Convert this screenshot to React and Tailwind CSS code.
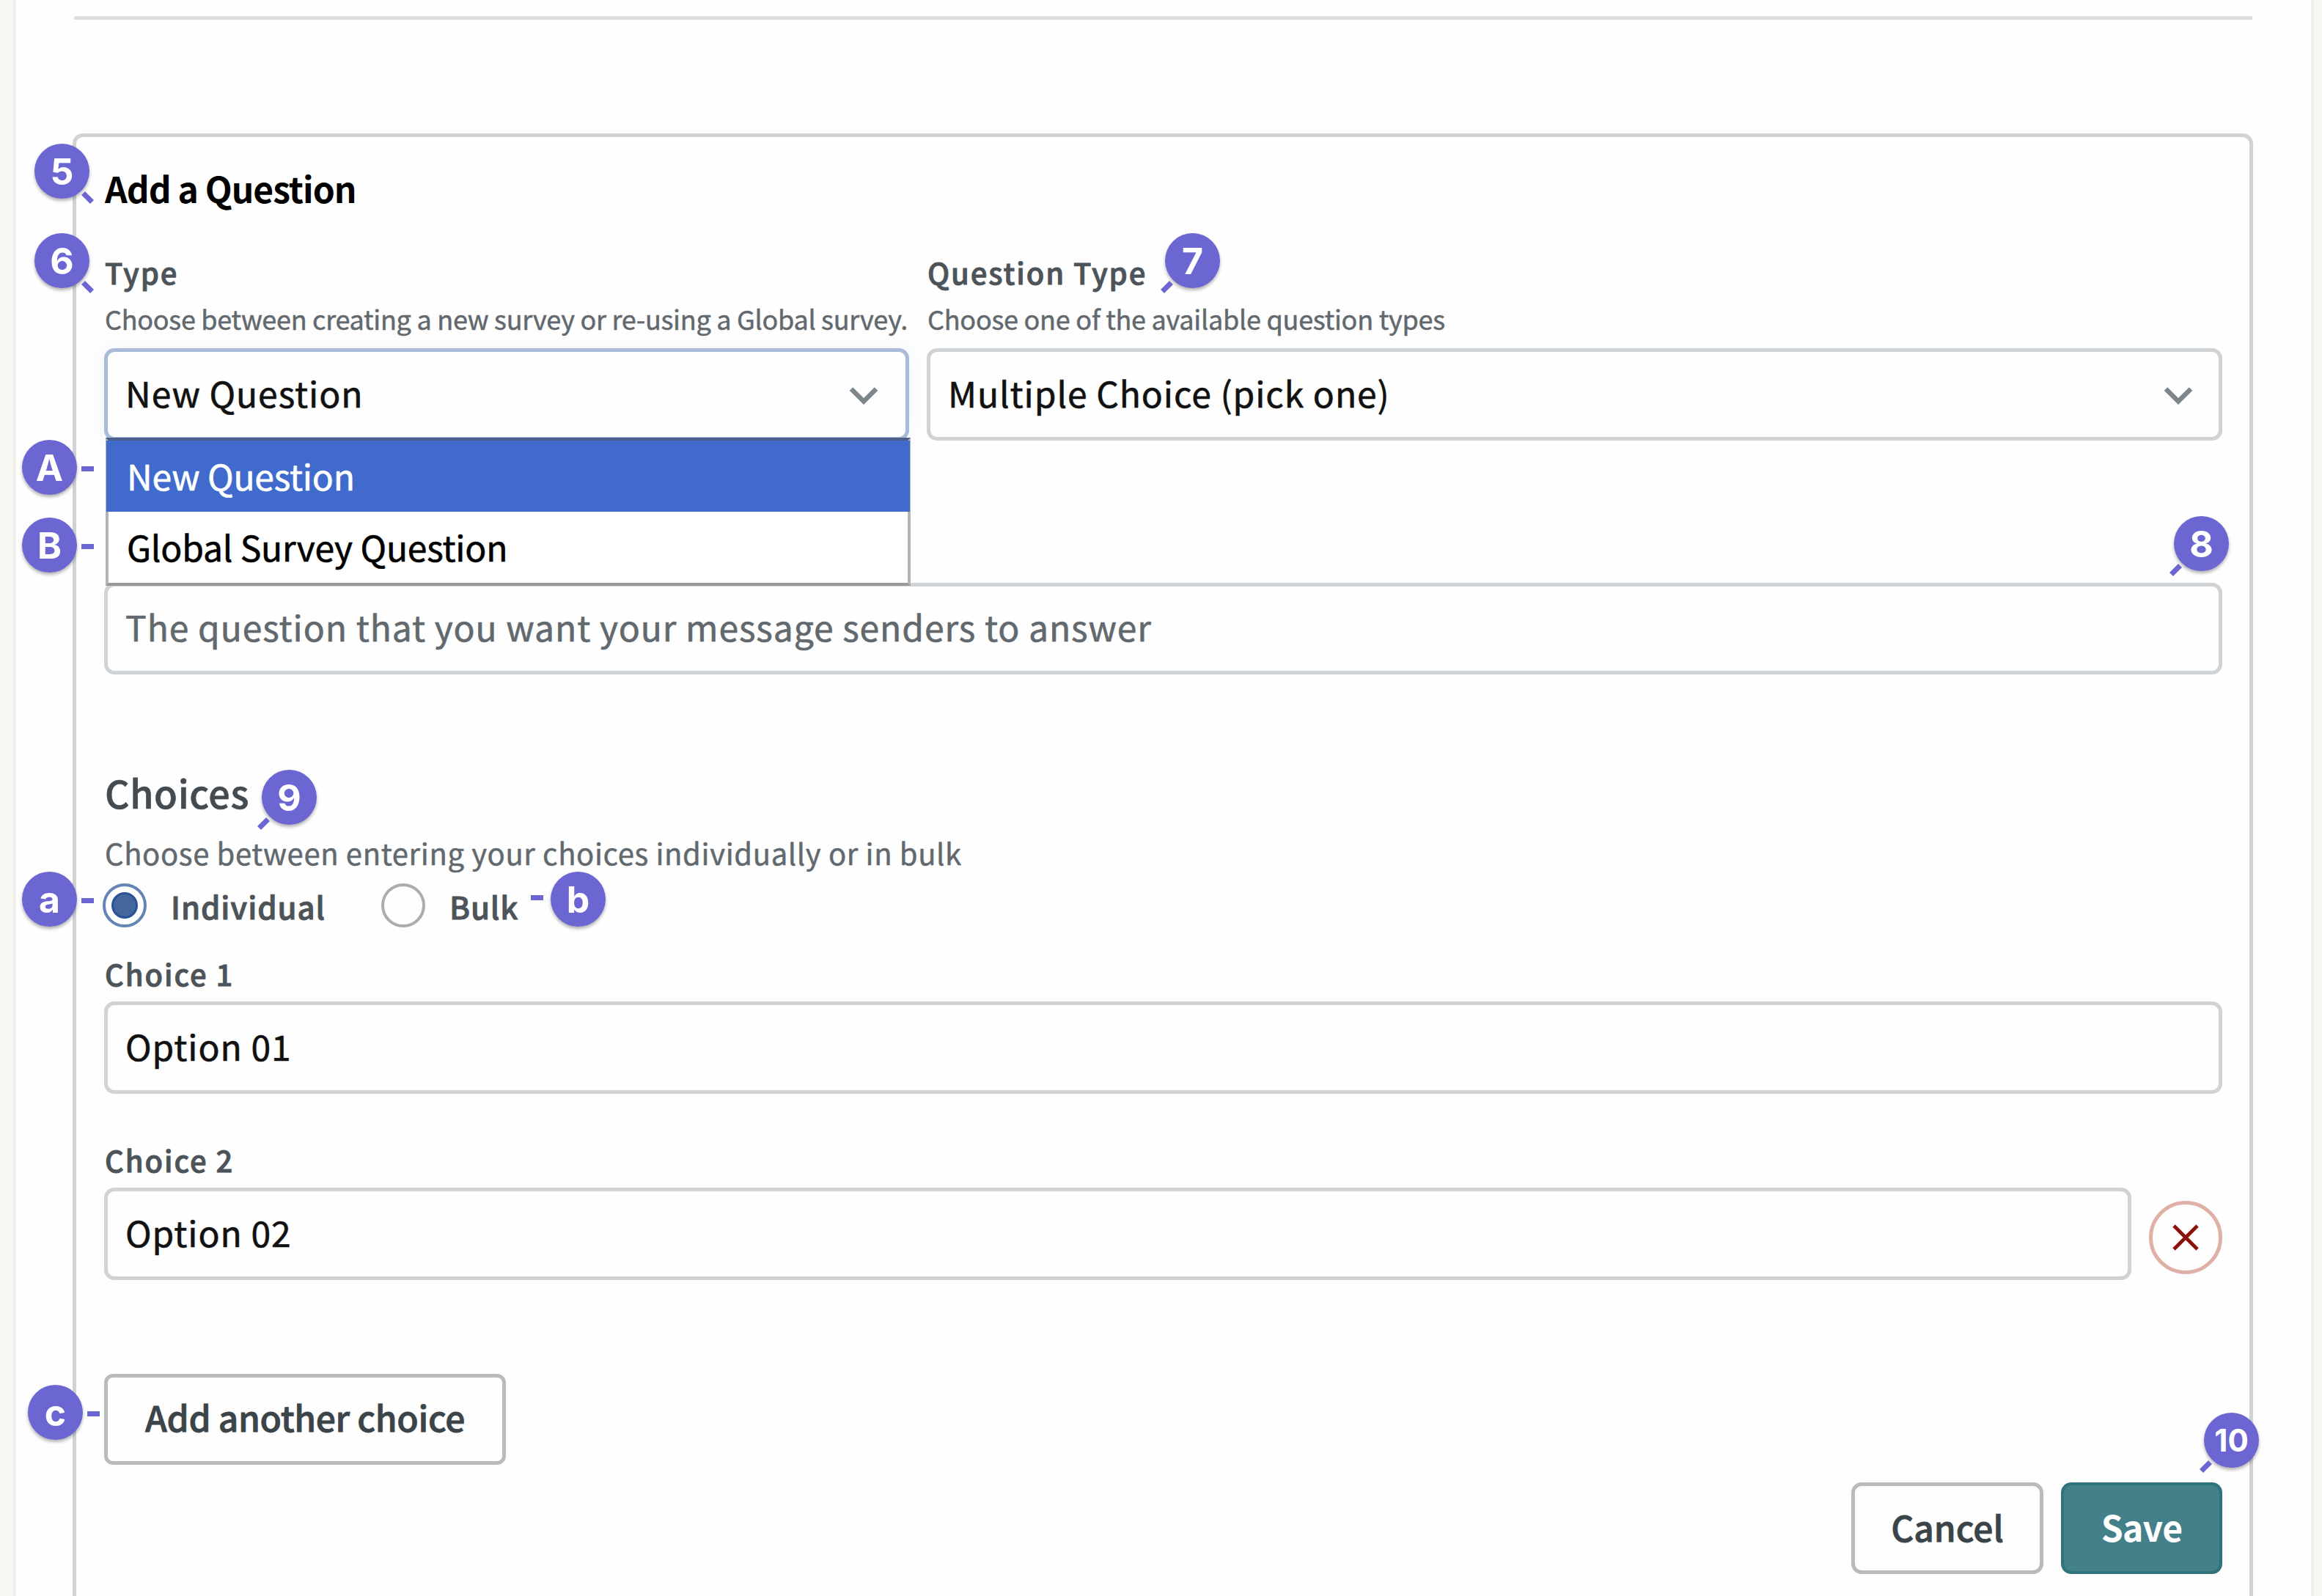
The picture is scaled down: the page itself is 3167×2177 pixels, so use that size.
const FONT = "font-['Noto_Sans_CJK_SC','Noto_Sans',sans-serif]";

const badges = [
  { label: '5', pos: 'left-[47px] top-[196px]', tail: 'br' },
  { label: '6', pos: 'left-[47px] top-[318px]', tail: 'br' },
  { label: '7', pos: 'left-[1589px] top-[318px]', tail: 'bl' },
  { label: '8', pos: 'left-[2965px] top-[704px]', tail: 'bl' },
  { label: '9', pos: 'left-[357px] top-[1050px]', tail: 'bl' },
  { label: '10', pos: 'left-[3006px] top-[1927px]', tail: 'bl' },
  { label: 'A', pos: 'left-[30px] top-[600px]', tail: 'r' },
  { label: 'B', pos: 'left-[30px] top-[706px]', tail: 'r' },
  { label: 'a', pos: 'left-[30px] top-[1189px]', tail: 'r' },
  { label: 'b', pos: 'left-[751px] top-[1189px]', tail: 'l' },
  { label: 'c', pos: 'left-[38px] top-[1889px]', tail: 'r' },
];

const tails = {
  br: 'left-[64px] top-[70px] rotate-45',
  bl: 'left-[-6px] top-[70px] -rotate-45',
  r: 'left-[81px] top-[36px]',
  l: 'left-[-27px] top-[32px]',
};

function Badge({ label, pos, tail }) {
  return (
    <div className={`absolute size-[75px] ${pos}`}>
      <div className="flex size-[75px] items-center justify-center rounded-full bg-[#6c66d3] shadow-[0_3px_4px_rgba(0,0,0,0.3)]">
        <span className={`font-['Inter',sans-serif] font-bold leading-none text-white ${label.length > 1 ? 'text-[42px]' : 'text-[50px]'}`}>
          {label}
        </span>
      </div>
      <div className={`absolute h-[7px] w-[17px] bg-[#6c66d3] ${tails[tail]}`} />
    </div>
  );
}

function Chevron() {
  return (
    <svg className="mt-[11px]" width="40" height="26" viewBox="0 0 40 26" fill="none" stroke="#7d868b" strokeWidth="6.5">
      <path d="M3 3.5 L20 20.5 L37 3.5" />
    </svg>
  );
}

function Label({ children, className = '' }) {
  return (
    <div className={`pl-px text-[40px] leading-[50px] font-medium tracking-[1.9px] text-[#4d5459] [-webkit-text-stroke:0.9px] ${className}`}>
      {children}
    </div>
  );
}

function Field({ children, border = 'border-[#d0d3d5]', color = 'text-[#111]', className = '' }) {
  return (
    <div
      className={`flex items-center justify-between rounded-[14px] border-[5px] pb-[7px] pl-[24px] text-[48px] leading-[60px] tracking-[0.93px] [-webkit-text-stroke:0.6px] ${border} ${color} ${className}`}
    >
      {children}
    </div>
  );
}

export default function App() {
  return (
    <div className={`relative h-[2177px] w-[3167px] overflow-hidden bg-[#f7f6f2] pr-[11px] pl-[18px] ${FONT}`}>
      <div className="h-full border-x-[4px] border-[#efeee9] bg-[#fefefe] pr-[79px] pl-[77px]">
        <div className="flex h-full flex-col">
          <div className="mt-[22px] mr-px ml-[2px] h-[5px] shrink-0 bg-[#dcdfdf]" />

          <div className="mt-[155px] h-[2100px] shrink-0 rounded-t-[14px] border-[5px] border-[#d0d3d5] pt-[39px] pr-[37px] pl-[38px]">
            <h2 className="pl-px text-[48px] leading-[60px] font-bold tracking-[-1px] text-black">Add a Question</h2>

            <div className="mt-[60px] flex gap-[24px]">
              <div className="relative w-[1098px]">
                <Label>Type</Label>
                <p className="mt-[15px] pl-px text-[36px] leading-[46px] tracking-[-0.28px] whitespace-nowrap text-[#62696e] [-webkit-text-stroke:0.5px]">
                  Choose between creating a new survey or re-using a Global survey.
                </p>
                <Field
                  border="border-[#a9bbd8]"
                  className="mt-[18px] h-[126px] pr-[37px] shadow-[0_0_24px_rgba(80,110,200,0.07)]"
                >
                  <span>New Question</span>
                  <Chevron />
                </Field>

                <div className="absolute top-[251px] left-[2px] z-10 h-[202px] w-[1098px] border-[4px] border-t-[#4a5f8c] border-r-[#b4b4b4] border-b-[#999] border-l-[#b4b4b4] bg-white text-[48px] leading-[60px] tracking-[-0.2px] [-webkit-text-stroke:0.6px]">
                  <div className="-mx-[3px] flex h-[97px] items-center bg-[#406acb] pb-[4px] pl-[28px] text-white">New Question</div>
                  <div className="flex h-[97px] items-center pb-[4px] pl-[25px] text-black">Global Survey Question</div>
                </div>
              </div>

              <div className="flex-1">
                <Label>Question Type</Label>
                <p className="mt-[15px] pl-px text-[36px] leading-[46px] tracking-[-0.25px] text-[#62696e] [-webkit-text-stroke:0.5px]">
                  Choose one of the available question types
                </p>
                <Field className="mt-[18px] h-[126px] pr-[35px]">
                  <span>Multiple Choice (pick one)</span>
                  <Chevron />
                </Field>
              </div>
            </div>

            <Field color="text-[#62696e]" className="mt-[194px] h-[125px]">
              <span>The question that you want your message senders to answer</span>
            </Field>

            <h3 className="mt-[129px] pl-px text-[52px] leading-[64px] font-medium tracking-[0.6px] text-[#444b50] [-webkit-text-stroke:0.6px]">
              Choices
            </h3>
            <p className="mt-[25px] pl-px text-[40px] leading-[50px] tracking-[0.64px] text-[#62696e] [-webkit-text-stroke:0.5px]">
              Choose between entering your choices individually or in bulk
            </p>

            <div className="mt-[17px] -ml-[2px] flex h-[60px] items-center text-[42px] font-medium tracking-[0.9px] text-[#4d5459] [-webkit-text-stroke:0.9px]">
              <div className="flex size-[60px] items-center justify-center rounded-full border-[4px] border-[#6484b5]">
                <div className="size-[36px] rounded-full border-[3px] border-[#2a5296] bg-[#44669f]" />
              </div>
              <span className="ml-[33px] w-[287px]">Individual</span>
              <div className="size-[60px] rounded-full border-[4px] border-[#a9adb0]" />
              <span className="ml-[33px]">Bulk</span>
            </div>

            <Label className="mt-[38px]">Choice 1</Label>
            <Field className="mt-[13px] h-[126px]">Option 01</Field>

            <Label className="mt-[65px]">Choice 2</Label>
            <div className="mt-[13px] flex gap-[24px]">
              <Field className="h-[126px] flex-1">Option 02</Field>
              <button className="mt-[18px] flex size-[100px] items-center justify-center rounded-full border-[5px] border-[#dfb0a5]">
                <svg width="36" height="36" viewBox="0 0 36 36" fill="none" stroke="#8c1108" strokeWidth="4.8">
                  <path d="M2 2 L34 34 M34 2 L2 34" />
                </svg>
              </button>
            </div>

            <button className="mt-[128px] block h-[124px] w-[548px] rounded-[12px] border-[5px] border-[#b8babc] pb-[9px] text-center text-[48px] leading-[60px] font-medium tracking-[-0.35px] text-[#3b4449] [-webkit-text-stroke:0.8px]">
              Add another choice
            </button>

            <div className="mt-[24px] flex justify-end gap-[24px] text-[48px] leading-[60px]">
              <button className="h-[125px] w-[262px] rounded-[14px] border-[5px] border-[#b8babc] pb-[6px] font-medium text-[#3b4449] [-webkit-text-stroke:0.8px]">
                Cancel
              </button>
              <button className="h-[125px] w-[220px] rounded-[14px] border-[4px] border-[#2f737c] bg-[#448089] pb-[6px] font-bold tracking-[-0.7px] text-white">
                Save
              </button>
            </div>
          </div>
        </div>
      </div>

      {badges.map((b) => (
        <Badge key={b.label} {...b} />
      ))}
    </div>
  );
}
